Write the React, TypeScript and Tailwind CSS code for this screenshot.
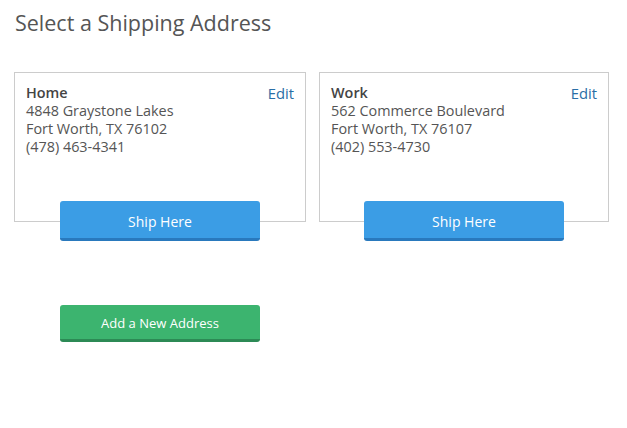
import React from "react";

const addresses = [
  { name: "Home", line1: "4848 Graystone Lakes", line2: "Fort Worth, TX 76102", phone: "(478) 463-4341", w: "w-[292px]" },
  { name: "Work", line1: "562 Commerce Boulevard", line2: "Fort Worth, TX 76107", phone: "(402) 553-4730", w: "w-[290px]" },
];

export default function App() {
  return (
    <div className="w-[627px] h-[428px] bg-white pl-[14px] pt-[8px]" style={{ fontFamily: '"Open Sans", sans-serif' }}>
      <h1 className="text-[21.5px] leading-[30px] text-[#555555] ml-[1px]">Select a Shipping Address</h1>
      <div className="flex gap-[13px] mt-[34px]">
        {addresses.map((a) => (
          <div key={a.name} className={`flex flex-col items-center ${a.w}`}>
            <div className="w-full h-[150px] border border-[#cccccc] pt-[11px] pl-[11px] pr-[10px] text-[14.4px] leading-[18px] text-[#555555]">
              <div className="flex justify-between">
                <span className="font-semibold text-[#444444]">{a.name}</span>
                <span className="text-[#2a6ea6] text-[14.8px] mr-[1px]">Edit</span>
              </div>
              <div>{a.line1}</div>
              <div>{a.line2}</div>
              <div>{a.phone}</div>
            </div>
            <button className="-mt-[21px] w-[200px] h-[40px] pt-[3px] rounded-[3px] bg-[#3b9de5] border-b-[3px] border-[#2979bd] text-white text-[14px]">
              Ship Here
            </button>
          </div>
        ))}
      </div>
      <button className="mt-[64px] ml-[46px] w-[200px] h-[37px] pt-[3px] rounded-[3px] bg-[#3cb46f] border-b-[3px] border-[#2c8a55] text-white text-[13px]">
        Add a New Address
      </button>
    </div>
  );
}
